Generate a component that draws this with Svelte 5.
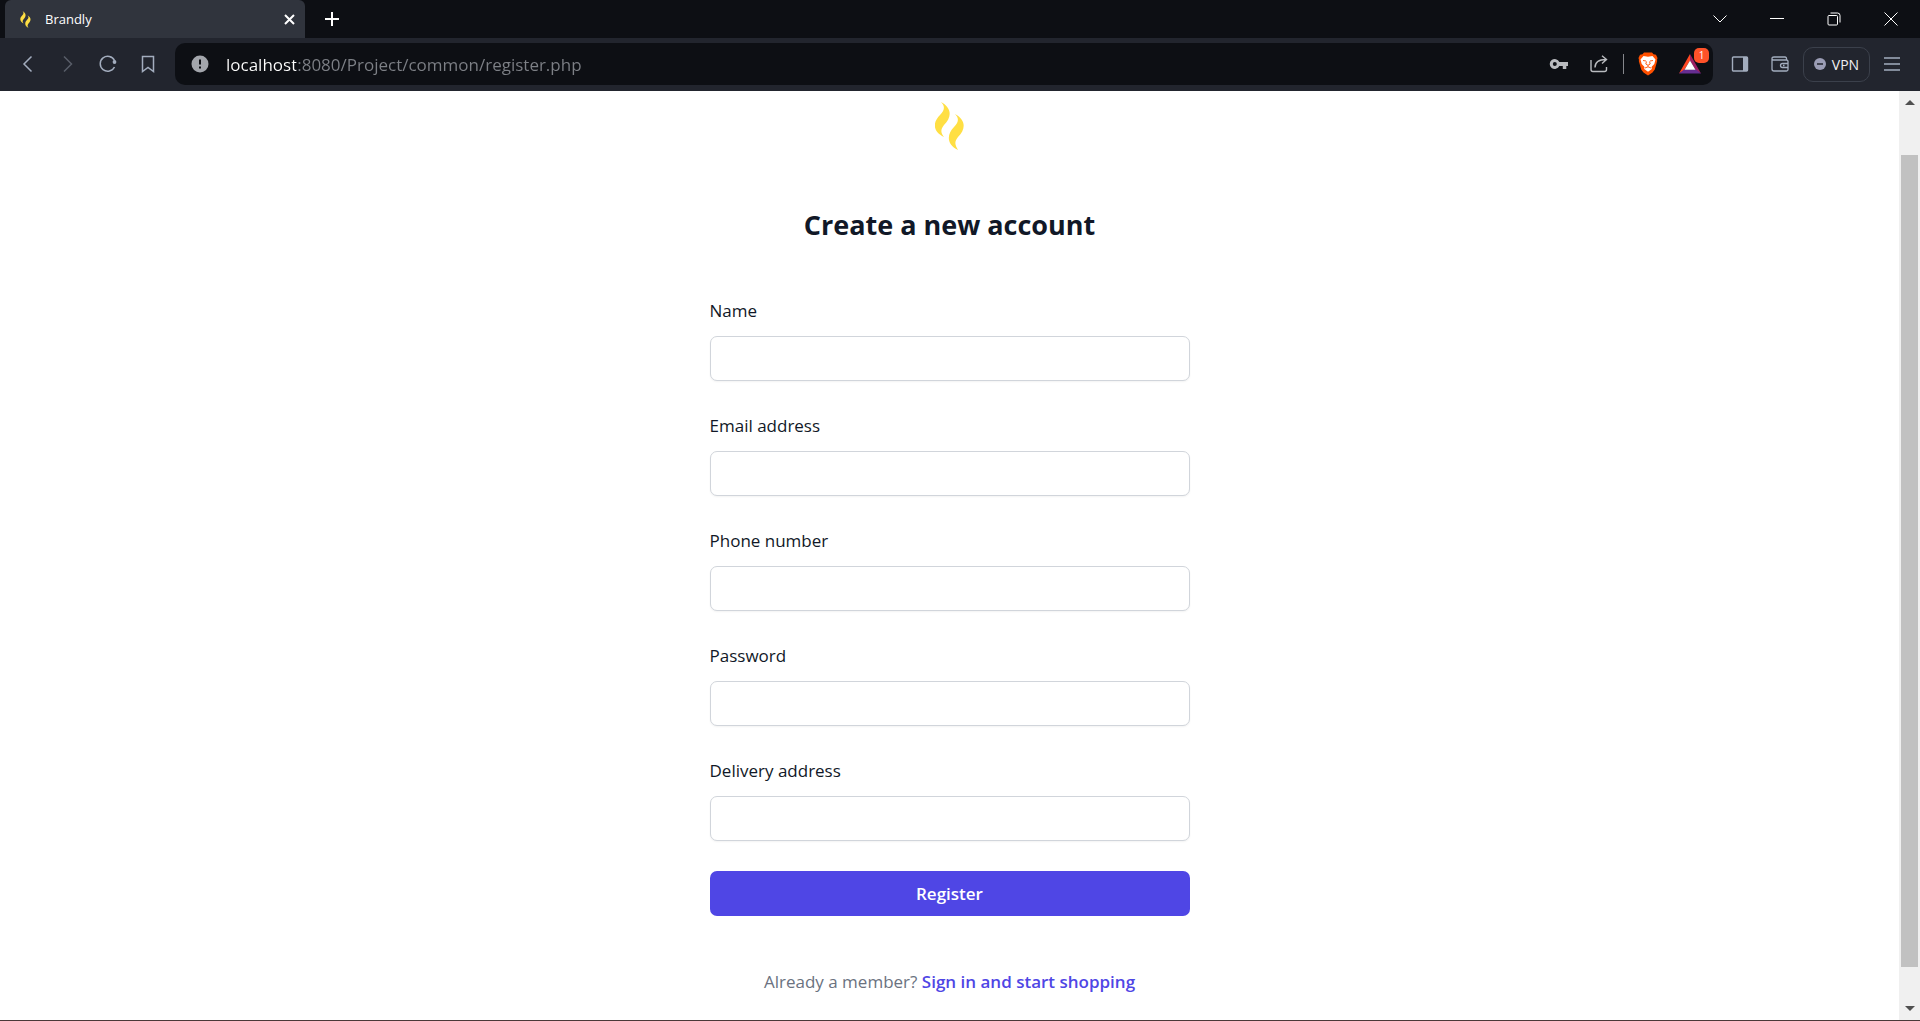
<script>
  const fields = [
    { id: 'name', label: 'Name', type: 'text' },
    { id: 'email', label: 'Email address', type: 'email' },
    { id: 'phone', label: 'Phone number', type: 'tel' },
    { id: 'password', label: 'Password', type: 'password' },
    { id: 'address', label: 'Delivery address', type: 'text' }
  ];
  let address = $state('localhost:8080/Project/common/register.php');
</script>

{#snippet flame()}
  <path d="M6 0C17 6 17 15 9 23C5 28 6 31 9 35C-3 29-2 20 5 13C10 8 10 4 6 0Z" />
  <path d="M20 12C31 18 31 27 23 35C19 40 20 43 23 48C11 42 12 32 19 25C24 20 24 16 20 12Z" />
{/snippet}

<div class="browser">
  <header>
    <div class="tabs">
      <div class="tab">
        <svg class="favicon" viewBox="0 0 29 48" width="11" height="17" aria-hidden="true">{@render flame()}</svg>
        <span>Brandly</span>
        <button aria-label="Close tab">
          <svg width="11" height="11" viewBox="0 0 11 11"><path d="M1 1l9 9M10 1l-9 9" stroke-width="2" /></svg>
        </button>
      </div>
      <button class="new-tab" aria-label="New tab">
        <svg width="16" height="16" viewBox="0 0 16 16"><path d="M8 1v14M1 8h14" stroke-width="2" /></svg>
      </button>
      <div class="window-controls">
        <button aria-label="Search tabs"><svg width="14" height="8" viewBox="0 0 14 8"><path d="M.5.5L7 7l6.500-6.500" /></svg></button>
        <button aria-label="Minimize"><svg width="14" height="14" viewBox="0 0 14 14"><path d="M0 6.500h14" /></svg></button>
        <button aria-label="Restore"><svg width="14" height="14" viewBox="0 0 14 14"><rect x="1" y="3.500" width="9.500" height="9.500" rx="1" /><path d="M3.500 1h7q2.500 0 2.500 2.500v7" /></svg></button>
        <button aria-label="Close window"><svg width="14" height="14" viewBox="0 0 14 14"><path d="M.5.5l13 13M13.500.5l-13 13" /></svg></button>
      </div>
    </div>

    <div class="toolbar">
      <nav aria-label="Browser navigation">
        <button aria-label="Back"><svg width="18" height="18" viewBox="0 0 18 18"><path d="M12.500 1.500L5 9l7.500 7.500" stroke-width="1.500" /></svg></button>
        <button aria-label="Forward" class="dim"><svg width="18" height="18" viewBox="0 0 18 18"><path d="M5 1.500L12.500 9 5 16.500" stroke-width="1.500" /></svg></button>
        <button aria-label="Reload"><svg width="18" height="18" viewBox="0 0 18 18"><path d="M15.500 5.500A7.500 7.500 0 1 0 15.500 12" stroke-width="1.500" /><circle cx="15.500" cy="7" r="1.900" fill="currentColor" stroke="none" /></svg></button>
        <button aria-label="Bookmark"><svg width="18" height="18" viewBox="0 0 18 18"><path d="M3.500 1.500h11v15L9 12.500l-5.500 4z" stroke-width="1.500" /></svg></button>
      </nav>

      <div class="location">
        <button class="info" aria-label="View site information">
          <svg width="18" height="18" viewBox="0 0 18 18"><circle cx="9" cy="9" r="8.500" fill="#a3a6ac" stroke="none" /><path d="M9 4.500v5M9 11.500v2" stroke="#0d0f14" stroke-width="2" /></svg>
        </button>
        <input class="url" aria-label="Address" bind:value={address} spellcheck="false" />
        <button aria-label="Saved passwords">
          <svg width="20" height="14" viewBox="0 0 20 14"><path fill="#b9bbbf" stroke="none" fill-rule="evenodd" d="M10.300 5H19v4h-1.700v3h-3.500V9h-3.500A5 5 0 1 1 10.300 5ZM5.800 5a2 2 0 1 0 0 4 2 2 0 0 0 0-4Z" /></svg>
        </button>
        <button aria-label="Share">
          <svg class="share" width="18" height="18" viewBox="0 0 18 18"><path d="M1 5v9.500q0 2 2 2h11.500q2 0 2-2V12M5 12.500C5 7 9 4.500 16 4.500M12 .8l4.500 3.700L12 8.500" stroke-width="1.400" /></svg>
        </button>
        <span class="divider"></span>
        <button class="brand" aria-label="Brave Shields">
          <svg width="20" height="24" viewBox="0 0 20 24">
            <path fill="#ff5000" stroke="none" d="M6 .5h8l1.500 1.800 2.500.4L19.500 6l-.5 2 .2 1-2.400 8.500-2.300 3L10 23.500l-4.500-3-2.300-3L.8 9 1 8 .5 6 2 2.700l2.500-.4Z" />
            <path fill="#fff" stroke="none" d="M5.500 4l4.500.8L14.500 4 17.500 7.500l-1.200 4.500-2.800 3 .3 2L10 19.800l-3.800-2.800.3-2-2.800-3-1.200-4.500Z" />
            <path stroke="#ff5000" stroke-width=".9" d="M5 8.500l3 .5M15 8.500l-3 .5M8.500 9.500L7.800 12l2.200 1.300 2.200-1.300-.7-2.500M10 13.300v1.500M7 16l3-1.200 3 1.200" />
          </svg>
        </button>
        <button class="rewards" aria-label="Brave Rewards, 1 notification">
          <svg width="24" height="20" viewBox="0 0 24 20">
            <path fill="#ff4724" stroke="none" d="M12 0v6.500L6 16.500 1 19.500Z" />
            <path fill="#9e1f63" stroke="none" d="M12 0l11 19.500-5-3L12 6.500Z" />
            <path fill="#662d91" stroke="none" d="M1 19.500l5-4h12l5 4Z" />
            <path fill="#fff" stroke="none" d="M12 6.500l5.500 9.300h-11Z" />
          </svg>
          <span class="badge">1</span>
        </button>
      </div>

      <div class="tools">
        <button aria-label="Sidebar"><svg width="18" height="18" viewBox="0 0 18 18"><rect x="1.500" y="2" width="15" height="14" rx="1" stroke-width="1.400" /><path fill="currentColor" stroke="none" d="M12 2h5v14h-5z" /></svg></button>
        <button aria-label="Wallet"><svg width="18" height="18" viewBox="0 0 18 18"><path d="M15.500 5V3.500q0-1.500-1.500-1.500H3Q1 2 1 3.500V14q0 2 2 2h12.500q1.500 0 1.500-1.500v-8Q17 5 15.500 5H3Q1 5 1 3.500M17 8.500h-5.500q-2 0-2 2t2 2H17M12 10.500h1.500" stroke-width="1.300" /></svg></button>
        <button class="vpn">
          <svg width="12" height="12" viewBox="0 0 12 12" aria-hidden="true"><circle cx="6" cy="6" r="6" fill="#9b9db5" stroke="none" /><path d="M3 6h6" stroke="#22252e" stroke-width="1.500" /></svg>
          VPN
        </button>
        <button aria-label="Menu"><svg width="18" height="14" viewBox="0 0 18 14"><path d="M1 1h16M1 7h16M1 13h16" stroke-width="1.400" /></svg></button>
      </div>
    </div>
  </header>

  <div class="viewport">
    <main>
      <svg class="logo" width="29" height="48" viewBox="0 0 29 48" role="img" aria-label="Brandly">{@render flame()}</svg>
      <h1>Create a new account</h1>
      <form onsubmit={(e) => e.preventDefault()}>
        {#each fields as field (field.id)}
          <div class="field">
            <label for={field.id}>{field.label}</label>
            <input id={field.id} name={field.id} type={field.type} />
          </div>
        {/each}
        <button class="submit" type="submit">Register</button>
      </form>
      <p>Already a member? <a href="#login">Sign in and start shopping</a></p>
    </main>
    <div class="scrollbar" aria-hidden="true">
      <svg width="10" height="5" viewBox="0 0 10 5"><path d="M0 5l5-5 5 5z" /></svg>
      <div class="thumb"></div>
      <svg width="10" height="5" viewBox="0 0 10 5"><path d="M0 0l5 5 5-5z" /></svg>
    </div>
  </div>
</div>

<style>
  :global(body) {
    margin: 0;
    background: #fff;
  }
  * {
    box-sizing: border-box;
  }
  .browser {
    display: flex;
    flex-direction: column;
    min-height: 100vh;
    font-family: 'Open Sans', 'Noto Sans', sans-serif;
    border-bottom: 1px solid #4a3838;
  }
  svg {
    display: block;
    flex: none;
    fill: none;
    stroke: currentColor;
  }
  button {
    display: flex;
    align-items: center;
    justify-content: center;
    padding: 0;
    border: 0;
    background: none;
    color: inherit;
    font: inherit;
    cursor: pointer;
  }
  .favicon,
  .logo {
    fill: #ffdf43;
    stroke: none;
  }

  .tabs {
    display: flex;
    height: 38px;
    padding: 0 1px 0 5px;
    background: #0d0f14;
    color: #fff;
  }
  .tab {
    display: flex;
    align-items: center;
    gap: 14px;
    width: 300px;
    padding: 0 10px 0 15px;
    border-radius: 6px 6px 0 0;
    background: #30343d;
    font-size: 13px;
  }
  .tab span {
    flex: 1;
  }
  .new-tab {
    width: 54px;
  }
  .window-controls {
    display: flex;
    margin-left: auto;
  }
  .window-controls button {
    width: 57px;
  }

  .toolbar {
    display: flex;
    align-items: center;
    gap: 7px;
    height: 53px;
    padding: 0 8px 1px;
    background: #22252e;
    color: #a3adbe;
  }
  nav,
  .tools {
    display: flex;
    align-items: center;
  }
  nav button,
  .tools button {
    width: 40px;
    height: 40px;
  }
  nav .dim {
    color: #585d68;
  }
  .location {
    display: flex;
    flex: 1;
    align-items: center;
    height: 42px;
    padding: 0 1px 0 5px;
    border-radius: 10px;
    background: #0d0f14;
    color: #b9bbbf;
  }
  .location button {
    width: 40px;
    height: 40px;
  }
  .url {
    flex: 1;
    min-width: 0;
    height: 40px;
    padding: 0 6px;
    border: 0;
    outline: 0;
    background: linear-gradient(90deg, #fff 76px, #7d8086 76px);
    background-clip: text;
    -webkit-text-fill-color: transparent;
    color: #7d8086;
    caret-color: #fff;
    font: inherit;
    font-size: 17px;
  }
  .divider {
    width: 1px;
    height: 20px;
    margin: 0 4px;
    background: #85878c;
  }
  .location .rewards {
    position: relative;
    width: 44px;
  }
  .badge {
    position: absolute;
    top: 4px;
    right: 3px;
    width: 15px;
    height: 15px;
    border-radius: 5px;
    background: #ff5229;
    color: #fff;
    font-size: 10px;
    line-height: 15px;
  }
  .tools .vpn {
    gap: 6px;
    width: 67px;
    height: 35px;
    margin: 0 2px 0 3px;
    border: 1px solid #3b404b;
    border-radius: 10px;
    color: #f0f0f3;
    font-size: 14px;
  }

  .viewport {
    display: flex;
    flex: 1;
  }
  main {
    display: flex;
    flex: 1;
    flex-direction: column;
    align-items: center;
    padding: 11px 24px 20px;
    color: #111827;
    font-size: 17px;
    line-height: 28px;
  }
  h1 {
    margin: 57px 0 53px;
    font-size: 27px;
    font-weight: 700;
    line-height: 36px;
  }
  form {
    display: flex;
    flex-direction: column;
    gap: 30px;
    width: 100%;
    max-width: 480px;
  }
  .field {
    display: flex;
    flex-direction: column;
    gap: 10px;
  }
  label {
    font-weight: 500;
    line-height: 30px;
  }
  .field input {
    width: 100%;
    height: 45px;
    padding: 8px 12px;
    border: 1px solid #d1d5db;
    border-radius: 7px;
    box-shadow: 0 1px 2px rgb(0 0 0 / 5%);
    background: #fff;
    font: inherit;
  }
  .submit {
    height: 45px;
    border-radius: 7px;
    background: #4f46e5;
    color: #fff;
    font-weight: 600;
  }
  p {
    margin: 52px 0 0;
    color: #6b7280;
  }
  a {
    color: #4f46e5;
    font-weight: 600;
    text-decoration: none;
  }

  .scrollbar {
    display: flex;
    flex-direction: column;
    align-items: center;
    width: 21px;
    padding: 9px 2px;
    background: #f0f0f0;
  }
  .scrollbar svg {
    fill: #505050;
    stroke: none;
  }
  .thumb {
    flex: 1;
    width: 100%;
    margin: 50px 0 39px;
    background: #c1c1c1;
  }
</style>
